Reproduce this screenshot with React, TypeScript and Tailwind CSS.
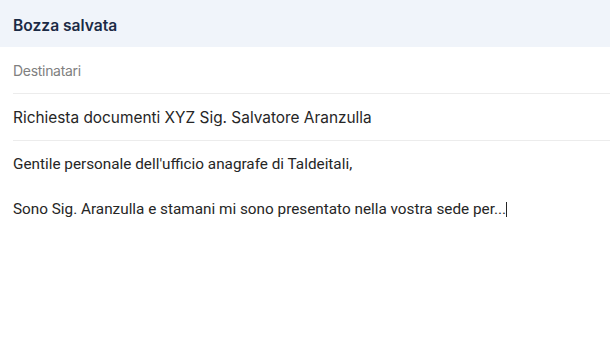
export default function App() {
  return (
    <div className="w-[610px] h-[343px] bg-white overflow-hidden">
      <div className="h-[47px] bg-[#f0f4fa] flex items-center px-[13px] pt-[4px] font-['Inter',sans-serif]">
        <span className="text-[15.6px] font-semibold text-[#1b2a45]">Bozza salvata</span>
      </div>
      <div className="pl-[13px] font-['Inter',sans-serif]">
        <div className="h-[47px] flex items-center border-b border-[#ececec]">
          <span className="text-[14px] tracking-[-0.3px] text-[#808080]">Destinatari</span>
        </div>
        <div className="h-[47px] flex items-center pt-[2px] border-b border-[#ececec]">
          <span className="text-[15.4px] text-[#262626]">Richiesta documenti XYZ Sig. Salvatore Aranzulla</span>
        </div>
      </div>
      <div className="px-[13px] pt-[13px] text-[15.3px] text-[#262626] leading-[20px] font-['Roboto',sans-serif]">
        <p>Gentile personale dell'ufficio anagrafe di Taldeitali,</p>
        <p className="mt-[25px]">
          Sono Sig. Aranzulla e stamani mi sono presentato nella vostra sede per...
          <span className="inline-block w-px h-[15px] bg-[#262626] align-[-3px]" />
        </p>
      </div>
    </div>
  );
}
